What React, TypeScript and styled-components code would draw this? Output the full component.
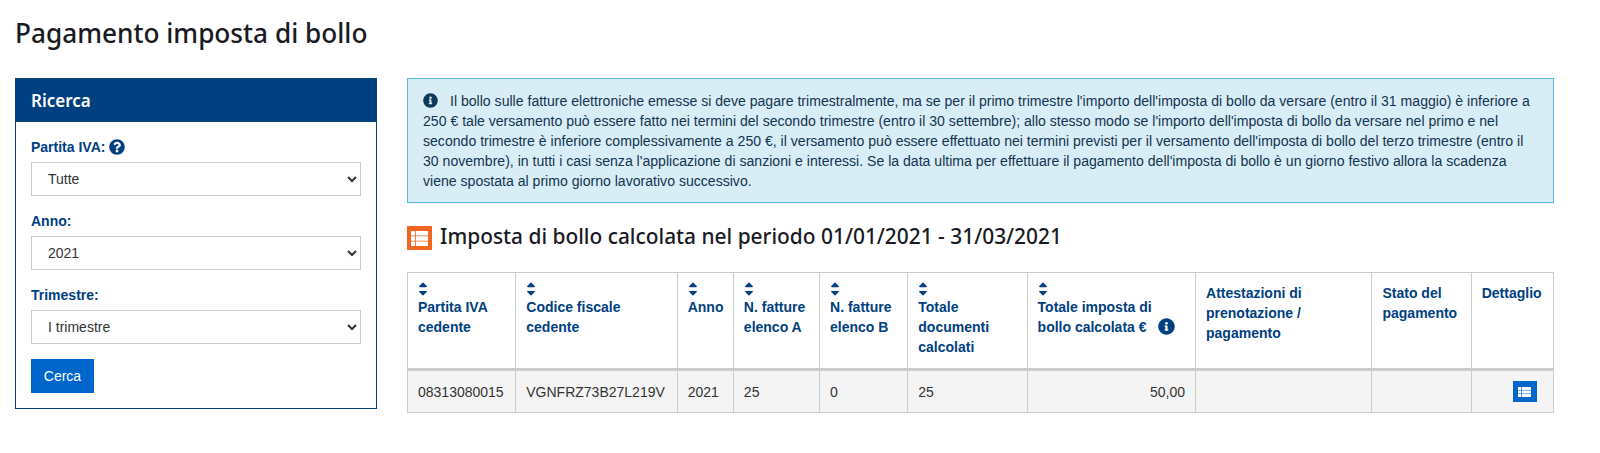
import React from "react";
import styled, { createGlobalStyle } from "styled-components";
import { FaInfoCircle, FaQuestionCircle, FaSortUp, FaSortDown } from "react-icons/fa";

const GlobalStyle = createGlobalStyle`
  html, body {
    margin: 0;
    padding: 0;
    background: #fff;
  }
  body {
    font-family: "Liberation Sans", Arial, sans-serif;
    font-size: 14px;
    color: #2a2a2a;
  }
`;

const Page = styled.div`
  padding: 17px 46px 0 15px;
`;

const PageTitle = styled.h1`
  margin: 0 0 28px;
  font-family: "Noto Sans", sans-serif;
  font-weight: 500;
  font-size: 26.2px;
  line-height: 33px;
  color: #1a1a24;
`;

const Columns = styled.div`
  display: grid;
  grid-template-columns: 362px 1fr;
  column-gap: 30px;
  align-items: start;
`;

const SearchPanel = styled.aside`
  border: 1px solid #004080;
  padding-bottom: 15px;
`;

const PanelTitle = styled.h2`
  margin: 0;
  height: 43px;
  padding-left: 15px;
  background: #004080;
  color: #fff;
  font-family: "Noto Sans", sans-serif;
  font-size: 17px;
  font-weight: 600;
  line-height: 44px;
`;

const PanelBody = styled.div`
  padding: 15px 15px 0;
`;

const Field = styled.div`
  margin-bottom: 15px;
`;

const Label = styled.label`
  box-sizing: border-box;
  display: flex;
  align-items: center;
  gap: 4px;
  height: 18px;
  padding-top: 2px;
  margin-bottom: 7px;
  color: #004080;
  font-size: 14px;
  font-weight: 700;
`;

const Select = styled.select`
  display: block;
  width: 100%;
  height: 34px;
  padding: 0 12px;
  border: 1px solid #ccc;
  border-radius: 0;
  background: #fff;
  color: #333;
  font-family: "Liberation Sans", Arial, sans-serif;
  font-size: 14px;
`;

const SearchButton = styled.button`
  display: block;
  width: 63px;
  height: 34px;
  border: 0;
  padding: 0;
  background: #0066cc;
  color: #fff;
  font-family: "Liberation Sans", Arial, sans-serif;
  font-size: 14px;
`;

const InfoBox = styled.div`
  box-sizing: border-box;
  height: 125px;
  padding: 12px 15px;
  border: 1px solid #5bb8d8;
  background: #d9edf7;
  color: #12344f;
  font-size: 14.08px;
  line-height: 20px;
`;

const InfoIcon = styled(FaInfoCircle)`
  width: 15px;
  height: 15px;
  margin-right: 12px;
  vertical-align: -2px;
  color: #0b3a5c;
`;

const SectionTitle = styled.div`
  display: flex;
  align-items: center;
  gap: 8px;
  margin-top: 23px;
  height: 24px;
`;

const SectionText = styled.h2`
  margin: 0 0 5px;
  font-family: "Noto Sans", sans-serif;
  font-size: 20.9px;
  font-weight: 500;
  color: #1a1a24;
`;

const DataTable = styled.table`
  width: 1147px;
  margin-top: 22px;
  table-layout: fixed;
  border-collapse: collapse;
`;

const HeadCell = styled.th`
  box-sizing: border-box;
  height: 97px;
  padding: 10px 10px 0;
  border: 1px solid #ccc;
  border-bottom: 3px solid #ccc;
  vertical-align: top;
  text-align: left;
  color: #004080;
  font-size: 14px;
  font-weight: 700;
  line-height: 20px;
`;

const BodyRow = styled.tr`
  background: #f4f4f4;
`;

const BodyCell = styled.td<{ $right?: boolean }>`
  box-sizing: border-box;
  height: 43px;
  padding: 0 10px;
  border: 1px solid #ccc;
  text-align: ${p => (p.$right ? "right" : "left")};
  color: #333;
  font-size: 14px;
`;

const SortMark = styled.span`
  display: block;
  position: relative;
  width: 10px;
  height: 15px;
  margin-top: -1px;
  color: #004080;
`;

const SortUp = styled(FaSortUp)`
  position: absolute;
  left: 0;
  top: -1px;
  width: 10px;
  height: 14px;
`;

const SortDown = styled(FaSortDown)`
  position: absolute;
  left: 0;
  top: 1px;
  width: 10px;
  height: 14px;
`;

const HeadInfo = styled(FaInfoCircle)`
  width: 17px;
  height: 17px;
  margin-left: 8px;
  vertical-align: -3px;
`;

const DetailButton = styled.button`
  display: flex;
  align-items: center;
  justify-content: center;
  width: 24px;
  height: 21px;
  margin-left: 31px;
  padding: 0;
  border: 0;
  background: #0066cc;
`;

const OrangeBadge = styled.span`
  display: flex;
  align-items: center;
  justify-content: center;
  width: 25px;
  height: 24px;
  background: #f0651f;
`;

const Sort = () => (
  <SortMark>
    <SortUp />
    <SortDown />
  </SortMark>
);

const ListGlyph: React.FC<{ w: number; h: number }> = ({ w, h }) => (
  <svg width={w} height={h} viewBox="0 0 17 15" preserveAspectRatio="none">
    {[0, 5.25, 10.5].map(y => (
      <g key={y} fill="#fff">
        <rect x="0" y={y} width="4" height="4.5" />
        <rect x="4.8" y={y} width="12.2" height="4.5" />
      </g>
    ))}
  </svg>
);

const columns = [108, 161, 56, 86, 88, 119, 168, 176, 99, 82];

const App: React.FC = () => (
  <Page>
    <GlobalStyle />
    <PageTitle>Pagamento imposta di bollo</PageTitle>
    <Columns>
      <SearchPanel>
        <PanelTitle>Ricerca</PanelTitle>
        <PanelBody>
          <Field>
            <Label>
              Partita IVA: <FaQuestionCircle size={16} />
            </Label>
            <Select defaultValue="Tutte">
              <option>Tutte</option>
            </Select>
          </Field>
          <Field>
            <Label>Anno:</Label>
            <Select defaultValue="2021">
              <option>2021</option>
            </Select>
          </Field>
          <Field>
            <Label>Trimestre:</Label>
            <Select defaultValue="I trimestre">
              <option>I trimestre</option>
            </Select>
          </Field>
          <SearchButton>Cerca</SearchButton>
        </PanelBody>
      </SearchPanel>
      <main>
        <InfoBox>
          <InfoIcon />
          Il bollo sulle fatture elettroniche emesse si deve pagare trimestralmente, ma se per il primo trimestre
          l'importo dell'imposta di bollo da versare (entro il 31 maggio) è inferiore a 250 € tale versamento può essere
          fatto nei termini del secondo trimestre (entro il 30 settembre); allo stesso modo se l'importo dell'imposta di
          bollo da versare nel primo e nel secondo trimestre è inferiore complessivamente a 250 €, il versamento può
          essere effettuato nei termini previsti per il versamento dell'imposta di bollo del terzo trimestre (entro il 30
          novembre), in tutti i casi senza l'applicazione di sanzioni e interessi. Se la data ultima per effettuare il
          pagamento dell'imposta di bollo è un giorno festivo allora la scadenza viene spostata al primo giorno lavorativo
          successivo.
        </InfoBox>
        <SectionTitle>
          <OrangeBadge>
            <ListGlyph w={17} h={15} />
          </OrangeBadge>
          <SectionText>Imposta di bollo calcolata nel periodo 01/01/2021 - 31/03/2021</SectionText>
        </SectionTitle>
        <DataTable>
          <colgroup>
            {columns.map((w, i) => (
              <col key={i} width={w} />
            ))}
          </colgroup>
          <thead>
            <tr>
              <HeadCell><Sort />Partita IVA cedente</HeadCell>
              <HeadCell><Sort />Codice fiscale cedente</HeadCell>
              <HeadCell><Sort />Anno</HeadCell>
              <HeadCell><Sort />N. fatture elenco A</HeadCell>
              <HeadCell><Sort />N. fatture elenco B</HeadCell>
              <HeadCell><Sort />Totale documenti calcolati</HeadCell>
              <HeadCell><Sort />Totale imposta di bollo calcolata € <HeadInfo /></HeadCell>
              <HeadCell>Attestazioni di prenotazione / pagamento</HeadCell>
              <HeadCell>Stato del pagamento</HeadCell>
              <HeadCell>Dettaglio</HeadCell>
            </tr>
          </thead>
          <tbody>
            <BodyRow>
              <BodyCell>08313080015</BodyCell>
              <BodyCell>VGNFRZ73B27L219V</BodyCell>
              <BodyCell>2021</BodyCell>
              <BodyCell>25</BodyCell>
              <BodyCell>0</BodyCell>
              <BodyCell>25</BodyCell>
              <BodyCell $right>50,00</BodyCell>
              <BodyCell />
              <BodyCell />
              <BodyCell>
                <DetailButton>
                  <ListGlyph w={13} h={10} />
                </DetailButton>
              </BodyCell>
            </BodyRow>
          </tbody>
        </DataTable>
      </main>
    </Columns>
  </Page>
);

export default App;
